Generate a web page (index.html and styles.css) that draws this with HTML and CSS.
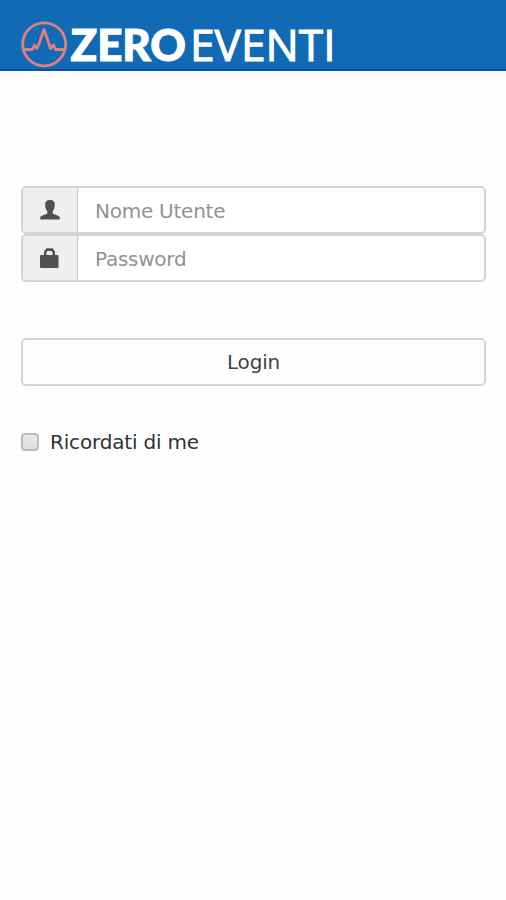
FILE: index.html
```html
<!DOCTYPE html>
<html lang="it">
<head>
<meta charset="utf-8">
<meta name="viewport" content="width=device-width, initial-scale=1">
<title>ZeroEventi</title>
<link rel="stylesheet" href="styles.css">
</head>
<body>
<header class="topbar">
  <svg class="logo" width="340" height="80" viewBox="0 0 340 80" role="img" aria-label="ZeroEventi">
    <g class="logo-mark">
      <circle cx="44.2" cy="44.3" r="21.500"/>
      <path d="M23 49.5H32.5L34.5 45L37 48.5L40 41L44 29.5L48 41L50.5 48.5L53.5 45L55.5 49.5H65"/>
    </g>
    <text class="logo-bold" x="70.500" y="61" textLength="115.500" lengthAdjust="spacingAndGlyphs">ZERO</text>
    <text class="logo-light" x="190" y="60.500" textLength="145.500" lengthAdjust="spacingAndGlyphs">EVENTI</text>
  </svg>
</header>
<main class="content">
  <form class="login">
    <div class="field">
      <span class="addon">
        <svg width="20" height="20" viewBox="0 0 20 20"><path d="M10 0C6.500 0 5 2 5.200 5C5.300 8 6 9.800 7.300 11.200V13.400C5 14.700.7 15.600.2 17.400V19.500H19.800V17.400C19.300 15.600 15 14.700 12.700 13.400V11.200C14 9.800 14.700 8 14.800 5C15 2 13.500 0 10 0Z"/></svg>
      </span>
      <input class="input" type="text" placeholder="Nome Utente">
    </div>
    <div class="field">
      <span class="addon">
        <svg class="lock" width="20" height="20" viewBox="0 0 20 20"><path fill-rule="evenodd" d="M4 7V3.500L6.500 .3H12.500L15 3.500V7H17.500Q18.500 7 18.500 8V19Q18.500 20 17.500 20H1Q0 20 0 19V8Q0 7 1 7ZM6.500 7H12.500V4.200L11.500 3H7.500L6.500 4.200Z"/></svg>
      </span>
      <input class="input" type="password" placeholder="Password">
    </div>
    <button class="submit" type="button">Login</button>
    <label class="remember"><input class="check" type="checkbox"><span>Ricordati di me</span></label>
  </form>
</main>
</body>
</html>
```

FILE: styles.css
```css
* { box-sizing: border-box; }
body {
  margin: 0;
  min-height: 900px;
  background: #fefefe;
  color: #333;
  font: 20px "DejaVu Sans", Verdana, sans-serif;
}
.topbar {
  height: 71px;
  background: #116bb4;
  border-bottom: 2px solid #0a51a0;
}
.logo { display: block; }
.logo-mark {
  fill: none;
  stroke: #e07f80;
  stroke-width: 2.8;
  stroke-linejoin: round;
}
.logo-bold, .logo-light { fill: #fff; stroke: #fff; }
.logo-bold {
  font: 900 44px Lato, sans-serif;
  stroke-width: 1;
}
.logo-light {
  font: 400 43px "Open Sans", sans-serif;
  stroke-width: 1;
}
.content { padding: 115px 20px 0 21px; }
.login { display: flex; flex-direction: column; }
.field {
  display: flex;
  height: 48px;
  border: 2px solid #d4d4d4;
  border-radius: 5px;
  overflow: hidden;
  background: #fff;
}
.addon {
  display: flex;
  align-items: center;
  justify-content: center;
  width: 55px;
  padding: 0 1px 1px 0;
  background: #efefef;
  border-right: 1px solid #c8c8c8;
  fill: #505050;
}
.input {
  flex: 1;
  min-width: 0;
  padding: 1px 17px 0;
  border: 0;
  background: none;
  font: inherit;
  letter-spacing: -.25px;
}
.input::placeholder { color: #929292; opacity: 1; }
.submit {
  height: 48px;
  margin-top: 56px;
  padding: 0;
  border: 2px solid #d4d4d4;
  border-radius: 5px;
  background: #fefefe;
  color: #444;
  font: inherit;
  letter-spacing: -.2px;
}
.remember {
  display: flex;
  align-items: center;
  gap: 11px;
  height: 24px;
  margin-top: 44px;
  letter-spacing: -.18px;
}
.check {
  appearance: none;
  width: 18px;
  height: 18px;
  margin: 0;
  border: 2px solid #bdbdbd;
  border-radius: 4px;
  background: linear-gradient(#e9e9e9, #dcdcdc);
}
```
